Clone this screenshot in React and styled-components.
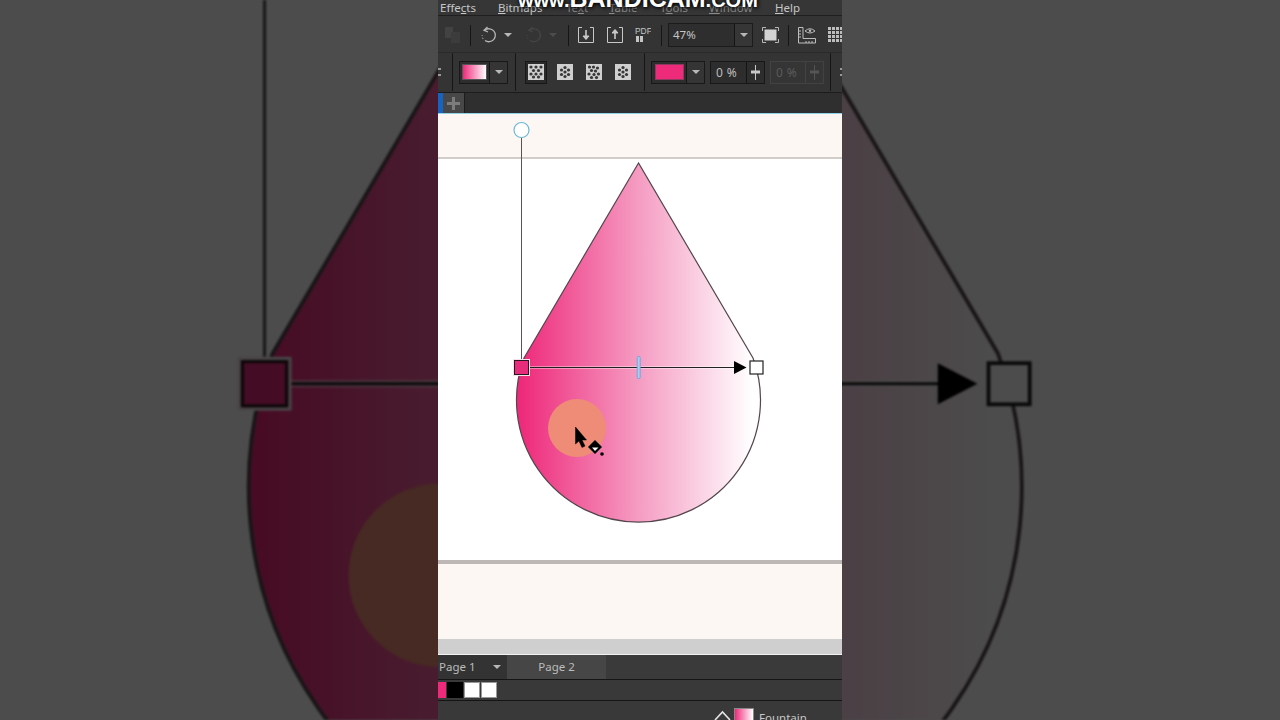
import React from "react";
import styled, { createGlobalStyle } from "styled-components";

const GlobalStyle = createGlobalStyle`
  html, body {
    margin: 0;
    padding: 0;
    background: #4d4d4d;
    overflow: hidden;
    font-family: "Noto Sans", "Open Sans", sans-serif;
  }
`;

const Screen = styled.div`
  position: relative;
  width: 1280px;
  height: 720px;
  overflow: hidden;
`;

const Backdrop = styled.div`
  position: absolute;
  inset: 0;
  background: #fff;

  svg {
    display: block;
    width: 100%;
    height: 100%;
    filter: blur(1px);
  }

  &::after {
    content: "";
    position: absolute;
    inset: 0;
    background: rgba(0, 0, 0, 0.7);
  }
`;

const Column = styled.div`
  position: relative;
  width: 404px;
  height: 720px;
  margin: 0 auto;
  display: flex;
  flex-direction: column;
  overflow: hidden;
  background: #343434;
  color: #c6c6c6;
`;

const Watermark = styled.div`
  position: absolute;
  top: -14px;
  left: 80px;
  font-family: "Liberation Sans", sans-serif;
  font-weight: bold;
  font-size: 25px;
  line-height: 25px;
  white-space: nowrap;
  color: #fff;
  text-shadow: 0 0 3px rgba(0, 0, 0, 0.8), 1px 1px 4px #000;

  small {
    font-size: 20px;
  }
`;

const MenuBar = styled.div`
  height: 15px;
  padding-left: 2px;
  display: flex;
  align-items: center;
  font-size: 11.5px;
  line-height: 15px;
  border-bottom: 1px solid #1f1f1f;
  background: #363636;
  flex-shrink: 0;
`;

const MenuItem = styled.span`
  width: ${(p) => p.$w}px;
  color: ${(p) => (p.$dim ? "#8b8b8b" : "#c6c6c6")};
  white-space: nowrap;
`;

const ToolBar = styled.div`
  height: 34px;
  padding-top: 2px;
  display: flex;
  align-items: center;
  background: #343434;
  flex-shrink: 0;
`;

const PropertyBar = styled.div`
  height: 38px;
  padding-bottom: 1px;
  display: flex;
  align-items: center;
  background: #343434;
  border-top: 1px solid #2a2a2a;
  border-bottom: 1px solid #1c1c1c;
  flex-shrink: 0;
`;

const Sep = styled.i`
  display: block;
  flex-shrink: 0;
  width: 1px;
  height: ${(p) => p.$h || 21}px;
  margin-left: ${(p) => p.$ml}px;
  background: #161616;
`;

const Slot = styled.span`
  display: flex;
  flex-shrink: 0;
  align-items: center;
  justify-content: center;
  width: ${(p) => p.$w || 16}px;
  height: ${(p) => p.$h || 16}px;
  margin-left: ${(p) => p.$ml || 0}px;

  svg {
    display: block;
  }
`;

const Caret = styled.i`
  display: block;
  flex-shrink: 0;
  width: 0;
  height: 0;
  margin-left: ${(p) => p.$ml || 0}px;
  border-left: 4px solid transparent;
  border-right: 4px solid transparent;
  border-top: 4px solid ${(p) => (p.$dim ? "#4c4c4c" : "#b8b8b8")};
`;

const Combo = styled.div`
  width: 85px;
  height: 24px;
  margin-left: 6px;
  display: flex;
  flex-shrink: 0;
  border: 1px solid #1b1b1b;
  box-sizing: border-box;
  background: #2e2e2e;
  font-size: 11.5px;
  line-height: 22px;
`;

const ComboValue = styled.span`
  flex: 1;
  padding-left: 4px;
  border-right: 1px solid #151515;
`;

const ComboButton = styled.span`
  width: 17px;
  display: flex;
  align-items: center;
  justify-content: center;
  background: #363636;
`;

const SwatchGroup = styled.div`
  width: ${(p) => p.$w}px;
  height: 23px;
  margin-left: ${(p) => p.$ml}px;
  display: flex;
  flex-shrink: 0;
  box-sizing: border-box;
  border: 1px solid #181818;
  background: #2d2d2d;
`;

const SwatchWell = styled.span`
  flex: 1;
  display: flex;
  align-items: center;
  justify-content: center;
  border-right: 1px solid #151515;
`;

const Swatch = styled.span`
  display: block;
  width: ${(p) => p.$w}px;
  height: 16px;
  box-sizing: border-box;
  background: ${(p) => p.$fill};
  border: 1px solid ${(p) => p.$edge};
`;

const SwatchCaret = styled.span`
  width: 17px;
  display: flex;
  align-items: center;
  justify-content: center;
  background: #353535;
`;

const PatternBox = styled.span`
  display: flex;
  flex-shrink: 0;
  align-items: center;
  justify-content: center;
  width: ${(p) => (p.$active ? 22 : 16)}px;
  height: ${(p) => (p.$active ? 23 : 16)}px;
  margin-left: ${(p) => p.$ml}px;
  box-sizing: border-box;
  border: ${(p) => (p.$active ? "1px solid #181818" : "none")};
  background: ${(p) => (p.$active ? "#2a2a2a" : "transparent")};
`;

const ValueBox = styled.div`
  width: ${(p) => p.$w}px;
  height: 23px;
  margin-left: ${(p) => p.$ml}px;
  display: flex;
  flex-shrink: 0;
  box-sizing: border-box;
  border: 1px solid ${(p) => (p.$dim ? "#424242" : "#181818")};
  background: ${(p) => (p.$dim ? "#353535" : "#2d2d2d")};
  color: ${(p) => (p.$dim ? "#5b5b5b" : "#bdbdbd")};
  font-size: 12px;
  line-height: 21px;
`;

const ValueText = styled.span`
  flex: 1;
  padding-left: 5px;
  letter-spacing: 0.4px;
  border-right: 1px solid ${(p) => (p.$dim ? "#424242" : "#151515")};
`;

const Spin = styled.span`
  width: 17px;
  display: flex;
  align-items: center;
  justify-content: center;
`;

const Grip = styled.span`
  flex-shrink: 0;
  width: ${(p) => p.$w || 2}px;
  height: 8px;
  margin-left: ${(p) => p.$ml}px;
  border-top: 2px dotted #999;
  border-bottom: 2px dotted #999;
  box-sizing: border-box;
`;

const TabStrip = styled.div`
  height: 20px;
  display: flex;
  background: #2f2f2f;
  border-bottom: 1px solid #90d2e8;
  flex-shrink: 0;
`;

const BlueTab = styled.span`
  width: 5px;
  background: #1565c0;
`;

const PlusTab = styled.span`
  width: 21px;
  display: flex;
  align-items: center;
  justify-content: center;
  background: #484848;
  border-right: 1px solid #1d1d1d;
`;

const Canvas = styled.div`
  position: relative;
  height: 525px;
  padding-top: 43px;
  box-sizing: border-box;
  background: #fcf7f3;
  flex-shrink: 0;

  svg {
    position: absolute;
    left: 0;
    top: 0;
    width: 404px;
    height: 540px;
  }
`;

const Paper = styled.div`
  height: 407px;
  background: #fff;
  border-top: 2px solid #d3cdc9;
  border-bottom: 4px solid #bdb8b5;
  box-sizing: border-box;
`;

const ScrollTrack = styled.div`
  height: 15px;
  background: #cfcfcf;
  border-bottom: 1px solid #f2f2f2;
  flex-shrink: 0;
`;

const PageTabs = styled.div`
  height: 24px;
  display: flex;
  background: #3a3a3a;
  border-bottom: 1px solid #151515;
  font-size: 11.5px;
  line-height: 24px;
  flex-shrink: 0;
`;

const PageTab = styled.span`
  width: ${(p) => p.$w}px;
  display: flex;
  align-items: center;
  justify-content: ${(p) => (p.$current ? "flex-start" : "center")};
  padding-left: ${(p) => (p.$current ? 1 : 0)}px;
  box-sizing: border-box;
  background: ${(p) => (p.$current ? "#333333" : "#464646")};
  color: #bcbcbc;
`;

const Palette = styled.div`
  height: 19px;
  padding-top: 1px;
  box-sizing: content-box;
  display: flex;
  align-items: flex-start;
  gap: 1px;
  background: #393939;
  border-bottom: 1px solid #151515;
  flex-shrink: 0;
`;

const Chip = styled.span`
  display: block;
  width: ${(p) => p.$w || 16}px;
  height: 16px;
  margin-top: 1px;
  background: ${(p) => p.$fill};
  box-sizing: border-box;
  border: ${(p) => (p.$edge ? `1px solid ${p.$edge}` : "none")};
`;

const StatusBar = styled.div`
  flex: 1;
  display: flex;
  align-items: flex-start;
  padding: 9px 0 0 276px;
  background: #393939;
  font-size: 11.5px;
  line-height: 15px;
  color: #c8c8c8;
`;

const StatusSwatch = styled.span`
  width: 20px;
  height: 22px;
  margin-left: 3px;
  margin-top: -2px;
  background: linear-gradient(90deg, #ee2a7b, #ffffff);
  border: 1px solid #888;
  box-sizing: border-box;
`;

const StatusLabel = styled.span`
  margin-left: 5px;
`;

// same artwork is used for the canvas and, zoomed up, for the dark video sides
const DropArt = ({ box, id, withCursor }) => (
  <svg viewBox={box} preserveAspectRatio="none">
    <defs>
      <linearGradient id={id} gradientUnits="userSpaceOnUse" x1="521" y1="0" x2="752" y2="0">
        <stop offset="0" stopColor="#ee2a7b" />
        <stop offset="0.5" stopColor="#f59ac1" />
        <stop offset="1" stopColor="#ffffff" />
      </linearGradient>
    </defs>
    <path
      d="M638.5 163 L524 358 A122 122 0 1 0 753 358 Z"
      fill={`url(#${id})`}
      stroke="#54464d"
      strokeWidth="1.2"
    />
    <circle cx="577" cy="428" r="29" fill="#ee8c78" />
    <line x1="521.5" y1="138" x2="521.5" y2="359" stroke="#555" strokeWidth="1" />
    <circle cx="521.5" cy="130" r="7.5" fill="#fff" stroke="#6db8d6" strokeWidth="1.2" />
    <line x1="529" y1="367.5" x2="736" y2="367.5" stroke="#fff" strokeWidth="2.4" opacity="0.5" />
    <line x1="529" y1="367.5" x2="736" y2="367.5" stroke="#222" strokeWidth="1" />
    <rect x="513" y="359" width="17" height="17" fill="#f3e3ea" />
    <rect x="514.5" y="360.5" width="14" height="14" fill="#e82c7c" stroke="#2a1520" strokeWidth="1" />
    <path d="M734 361 L746.5 367.5 L734 374 Z" fill="#000" />
    <rect x="750" y="361" width="13" height="13" fill="#fff" stroke="#222" strokeWidth="1.2" />
    <rect x="637.2" y="356.5" width="3" height="22" rx="1" fill="#a8cdf0" stroke="#6b9fd8" strokeWidth="0.8" />
    {withCursor && (
      <g>
        <path
          d="M575.5 427 L575.5 444 L579 441 L582 447.5 L585 446 L582 440 L586.5 440 Z"
          fill="#000"
          stroke="#000"
          strokeWidth="0.5"
        />
        <path d="M595 440 L602 447 L595 454 L588 447 Z" fill="#000" />
        <path d="M592 447.5 L598.5 447.5 L595 451 Z" fill="#fff" />
        <circle cx="602" cy="454" r="1.8" fill="#000" />
      </g>
    )}
  </svg>
);

const UndoIcon = ({ dim }) => (
  <svg width="18" height="18" viewBox="0 0 18 18" fill="none" stroke={dim ? "#454545" : "#b5b5b5"} strokeWidth="1.3">
    <path d="M5 4 A6.5 6.5 0 1 1 5 14.5" />
    <path d="M3 12 L2.6 12.6 M2.2 9 L2.2 9.6" strokeWidth="1.6" />
    <path d="M7.5 1 L4 4.2 L8 6" />
  </svg>
);

const ImportIcon = ({ up }) => (
  <svg width="16" height="16" viewBox="0 0 16 16" fill="none" stroke="#c8c8c8">
    <path d="M4 .5 H.5 V15.5 H15.5 V.5 H12" />
    <path d="M8 3 V12" strokeWidth="1.6" />
    {up ? <path d="M5 6 L8 2.5 L11 6 Z" fill="#c8c8c8" /> : <path d="M5 9 L8 12.5 L11 9 Z" fill="#c8c8c8" />}
  </svg>
);

const FullscreenIcon = () => (
  <svg width="17" height="16" viewBox="0 0 17 16" fill="none" stroke="#b8b8b8">
    <path d="M.5 4 V.5 H4 M13 .5 H16.5 V4 M16.5 12 V15.5 H13 M4 15.5 H.5 V12" />
    <rect x="2.5" y="2.5" width="12" height="11" fill="#d4d4d4" stroke="none" />
  </svg>
);

const RulerIcon = () => (
  <svg width="18" height="17" viewBox="0 0 18 17" fill="none" stroke="#bdbdbd">
    <path d="M.5 .5 H5 V11.5 H17.5 V16 H.5 Z" />
    <path d="M.5 4 H3 M.5 7 H3 M.5 10 H3 M8 16 V14 M11 16 V14 M14 16 V14" />
    <path d="M7 4 Q12 -.5 17 4 Q12 8 7 4 Z" />
    <circle cx="12" cy="3.8" r="1.2" fill="#bdbdbd" stroke="none" />
  </svg>
);

const GridIcon = () => (
  <svg width="17" height="16" viewBox="0 0 17 16" fill="#bdbdbd">
    {[0, 4, 8, 12].map((y) =>
      [0, 4, 8, 12].map((x) => <rect key={`${x}-${y}`} x={x} y={y} width="3" height="3" />)
    )}
  </svg>
);

const patterns = {
  check: [[3, 3], [8, 3], [13, 3], [5.5, 6.5], [10.5, 6.5], [3, 10], [8, 10], [13, 10], [5.5, 13], [10.5, 13]],
  cross: [[8, 3.5], [4.5, 6], [11.5, 6], [8, 8], [4.5, 10.5], [11.5, 10.5], [8, 12.5]],
  slant: [[3.5, 3], [7.5, 3], [11.5, 4], [5.5, 6.5], [9.5, 7], [3, 10], [8, 10.5], [12.5, 10], [5.5, 13.5], [10.5, 13.5]],
};

const PatternIcon = ({ kind }) => (
  <svg width="16" height="16" viewBox="0 0 16 16">
    <rect width="16" height="16" fill="#cfcfcf" />
    {patterns[kind].map(([x, y]) => (
      <circle key={`${x}-${y}`} cx={x} cy={y} r="1.6" fill="#262626" opacity="0.9" />
    ))}
  </svg>
);

const SplitIcon = ({ dim }) => {
  const c = dim ? "#555" : "#c8c8c8";
  return (
    <svg width="11" height="15" viewBox="0 0 11 15">
      <rect x="5" y="0" width="1" height="15" fill={c} />
      <rect x="1" y="5.5" width="9" height="3" fill={c} />
    </svg>
  );
};

export default function App() {
  return (
    <Screen>
      <GlobalStyle />
      <Backdrop>
        <DropArt box="438 246.3 404 227.4" id="drop-back" />
      </Backdrop>

      <Column>
        <MenuBar>
          <MenuItem $w={58}>Effe<u>c</u>ts</MenuItem>
          <MenuItem $w={68}><u>B</u>itmaps</MenuItem>
          <MenuItem $w={43} $dim>Te<u>x</u>t</MenuItem>
          <MenuItem $w={51} $dim><u>T</u>able</MenuItem>
          <MenuItem $w={49} $dim>T<u>o</u>ols</MenuItem>
          <MenuItem $w={66} $dim><u>W</u>indow</MenuItem>
          <MenuItem $w={30}><u>H</u>elp</MenuItem>
        </MenuBar>

        <ToolBar>
          <Slot $ml={7}>
            <svg width="16" height="16" viewBox="0 0 16 16" fill="#424242">
              <rect x="0" y="0" width="8" height="11" />
              <rect x="6" y="5" width="9" height="11" fill="#3c3c3c" />
            </svg>
          </Slot>
          <Sep $ml={9} />
          <Slot $ml={9} $w={18} $h={18}><UndoIcon /></Slot>
          <Caret $ml={6} />
          <Slot $ml={13} $w={18} $h={18}><UndoIcon dim /></Slot>
          <Caret $ml={6} $dim />
          <Sep $ml={11} />
          <Slot $ml={9}><ImportIcon /></Slot>
          <Slot $ml={13}><ImportIcon up /></Slot>
          <Slot $ml={12}>
            <svg width="16" height="16" viewBox="0 0 16 16" fill="#c4c4c4">
              <text x="0" y="7" fontSize="8.4" fontFamily="Liberation Sans, sans-serif">PDF</text>
              <rect x="1" y="9" width="3" height="6" />
              <rect x="5" y="9" width="3" height="6" />
            </svg>
          </Slot>
          <Sep $ml={10} />
          <Combo>
            <ComboValue>47%</ComboValue>
            <ComboButton><Caret /></ComboButton>
          </Combo>
          <Slot $ml={9} $w={17}><FullscreenIcon /></Slot>
          <Sep $ml={9} />
          <Slot $ml={9} $w={18} $h={17}><RulerIcon /></Slot>
          <Slot $ml={12} $w={17}><GridIcon /></Slot>
        </ToolBar>

        <PropertyBar>
          <Grip $ml={0} $w={1} />
          <Sep $ml={13} $h={38} />
          <SwatchGroup $ml={6} $w={49}>
            <SwatchWell>
              <Swatch $w={25} $fill="linear-gradient(90deg, #ee2a7b, #fff)" $edge="#555" />
            </SwatchWell>
            <SwatchCaret><Caret /></SwatchCaret>
          </SwatchGroup>
          <Sep $ml={7} $h={38} />
          <PatternBox $ml={9} $active><PatternIcon kind="check" /></PatternBox>
          <PatternBox $ml={10}><PatternIcon kind="cross" /></PatternBox>
          <PatternBox $ml={13}><PatternIcon kind="slant" /></PatternBox>
          <PatternBox $ml={13}><PatternIcon kind="cross" /></PatternBox>
          <Sep $ml={13} $h={38} />
          <SwatchGroup $ml={6} $w={54}>
            <SwatchWell>
              <Swatch $w={29} $fill="#ee2a7b" $edge="#8c3a5c" />
            </SwatchWell>
            <SwatchCaret><Caret /></SwatchCaret>
          </SwatchGroup>
          <ValueBox $ml={5} $w={55}>
            <ValueText>0 %</ValueText>
            <Spin><SplitIcon /></Spin>
          </ValueBox>
          <ValueBox $ml={5} $w={54} $dim>
            <ValueText $dim>0 %</ValueText>
            <Spin><SplitIcon dim /></Spin>
          </ValueBox>
          <Sep $ml={6} $h={38} />
          <Grip $ml={9} />
        </PropertyBar>

        <TabStrip>
          <BlueTab />
          <PlusTab>
            <svg width="13" height="13" viewBox="0 0 13 13" fill="#7c7c7c">
              <rect x="5" y="0" width="3" height="13" />
              <rect x="0" y="5" width="13" height="3" />
            </svg>
          </PlusTab>
        </TabStrip>

        <Canvas>
          <Paper />
          <DropArt box="438 114 404 540" id="drop-front" withCursor />
        </Canvas>
        <ScrollTrack />

        <PageTabs>
          <PageTab $w={69} $current>
            Page 1
            <Caret $ml={17} />
          </PageTab>
          <PageTab $w={99}>Page 2</PageTab>
        </PageTabs>

        <Palette>
          <Chip $w={8} $fill="#ee2a7b" />
          <Chip $fill="#000" />
          <Chip $fill="#fff" $edge="#999" />
          <Chip $fill="#fff" $edge="#999" />
        </Palette>

        <StatusBar>
          <svg width="17" height="11" viewBox="0 0 17 11" fill="none" stroke="#e4e4e4" strokeWidth="1.6">
            <path d="M1 10 L8.5 2 L16 10" />
          </svg>
          <StatusSwatch />
          <StatusLabel>Fountain</StatusLabel>
        </StatusBar>

        <Watermark>
          <small>www.</small>BANDICAM<small>.COM</small>
        </Watermark>
      </Column>
    </Screen>
  );
}
